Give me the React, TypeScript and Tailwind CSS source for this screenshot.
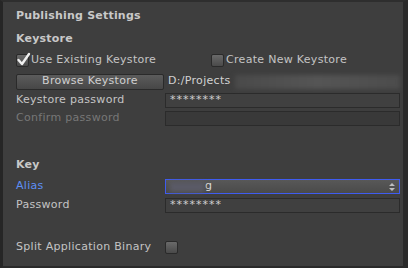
import React from 'react';

function Check({ checked }: { checked?: boolean }) {
  return (
    <div className="relative w-[13px] h-[13px] rounded-[2px] border border-[#2a2a2a] bg-gradient-to-b from-[#6a6a6a] to-[#4a4a4a] shrink-0">
      {checked && (
        <svg className="absolute -left-[1px] -top-[3px]" width="15" height="15" viewBox="0 0 15 15">
          <path d="M2.5 8 L6 12 L13 2" fill="none" stroke="#f0f0f0" strokeWidth="2.4" strokeLinecap="round" strokeLinejoin="round" />
        </svg>
      )}
    </div>
  );
}

function Field({ children, dim }: { children?: React.ReactNode; dim?: boolean }) {
  return (
    <div className={`flex-1 h-[15px] flex items-center px-[4px] border border-[#2b2b2b] ${dim ? 'bg-[#393939]' : 'bg-[#404040]'} text-[#d0d0d0] text-[11px] tracking-[1px]`}>
      {children}
    </div>
  );
}

export default function App() {
  return (
    <div
      className="w-[408px] h-[268px] bg-[#3e3e3e] border-t-[2px] border-t-[#2e2e2e] border-l-[3px] border-l-[#262626] border-r-[5px] border-r-[#2a2a2a] border-b-[2px] border-b-[#2a2a2a] text-[#c4c4c4] text-[11px] tracking-[0.3px] overflow-hidden"
      style={{ fontFamily: '"DejaVu Sans", Verdana, sans-serif' }}
    >
      <div className="flex flex-col pl-[13px] pr-[3px]">
        <div className="h-[26px] flex items-center font-bold text-[11px] tracking-[0.2px] text-[#c8c8c8] pt-[2px]">Publishing Settings</div>
        <div className="h-[21px] flex items-center font-bold text-[11px] tracking-[0.2px] text-[#c8c8c8] mt-[1px]">Keystore</div>
        <div className="h-[20px] flex items-center">
          <div className="w-[195px] flex items-center gap-[2px]">
            <Check checked />
            <span>Use Existing Keystore</span>
          </div>
          <div className="flex items-center gap-[2px]">
            <Check />
            <span>Create New Keystore</span>
          </div>
        </div>
        <div className="h-[19px] flex items-center mt-[2px]">
          <div className="w-[148px] h-[16px] rounded-[2px] border border-[#2a2a2a] bg-gradient-to-b from-[#5c5c5c] to-[#474747] flex items-center justify-center text-[#d0d0d0]">
            Browse Keystore
          </div>
          <span className="ml-[4px] text-[#d2d2d2]">D:/Projects</span>
          <div className="ml-[4px] flex-1 h-[14px] bg-gradient-to-r from-[#4a4a4a] via-[#555555] to-[#4c4c4c] blur-[2px]"></div>
        </div>
        <div className="h-[18px] flex items-center">
          <span className="w-[149px]">Keystore password</span>
          <Field>********</Field>
        </div>
        <div className="h-[18px] flex items-center">
          <span className="w-[149px] text-[#777777]">Confirm password</span>
          <Field dim />
        </div>
        <div className="h-[29px]"></div>
        <div className="h-[18px] flex items-center font-bold text-[11px] tracking-[0.2px] text-[#c8c8c8]">Key</div>
        <div className="h-[19px] flex items-center mt-[3px]">
          <span className="w-[149px] text-[#5d8ef5]">Alias</span>
          <div className="relative flex-1 h-[15px] flex items-center border border-[#3f5cf0] bg-gradient-to-b from-[#585858] to-[#4a4a4a] text-[#d8d8d8]">
            <div className="w-[34px] h-[10px] ml-[4px] bg-[#5a5a66] blur-[2px]"></div>
            <span className="ml-[1px]">g</span>
            <svg className="absolute right-[4px] top-[2px]" width="6" height="10" viewBox="0 0 6 10">
              <path d="M0 4 L3 1 L6 4 Z M0 6 L3 9 L6 6 Z" fill="#bdbdbd" />
            </svg>
          </div>
        </div>
        <div className="h-[18px] flex items-center">
          <span className="w-[149px]">Password</span>
          <Field>********</Field>
        </div>
        <div className="h-[24px]"></div>
        <div className="h-[18px] flex items-center">
          <span className="w-[149px]">Split Application Binary</span>
          <Check />
        </div>
      </div>
    </div>
  );
}
